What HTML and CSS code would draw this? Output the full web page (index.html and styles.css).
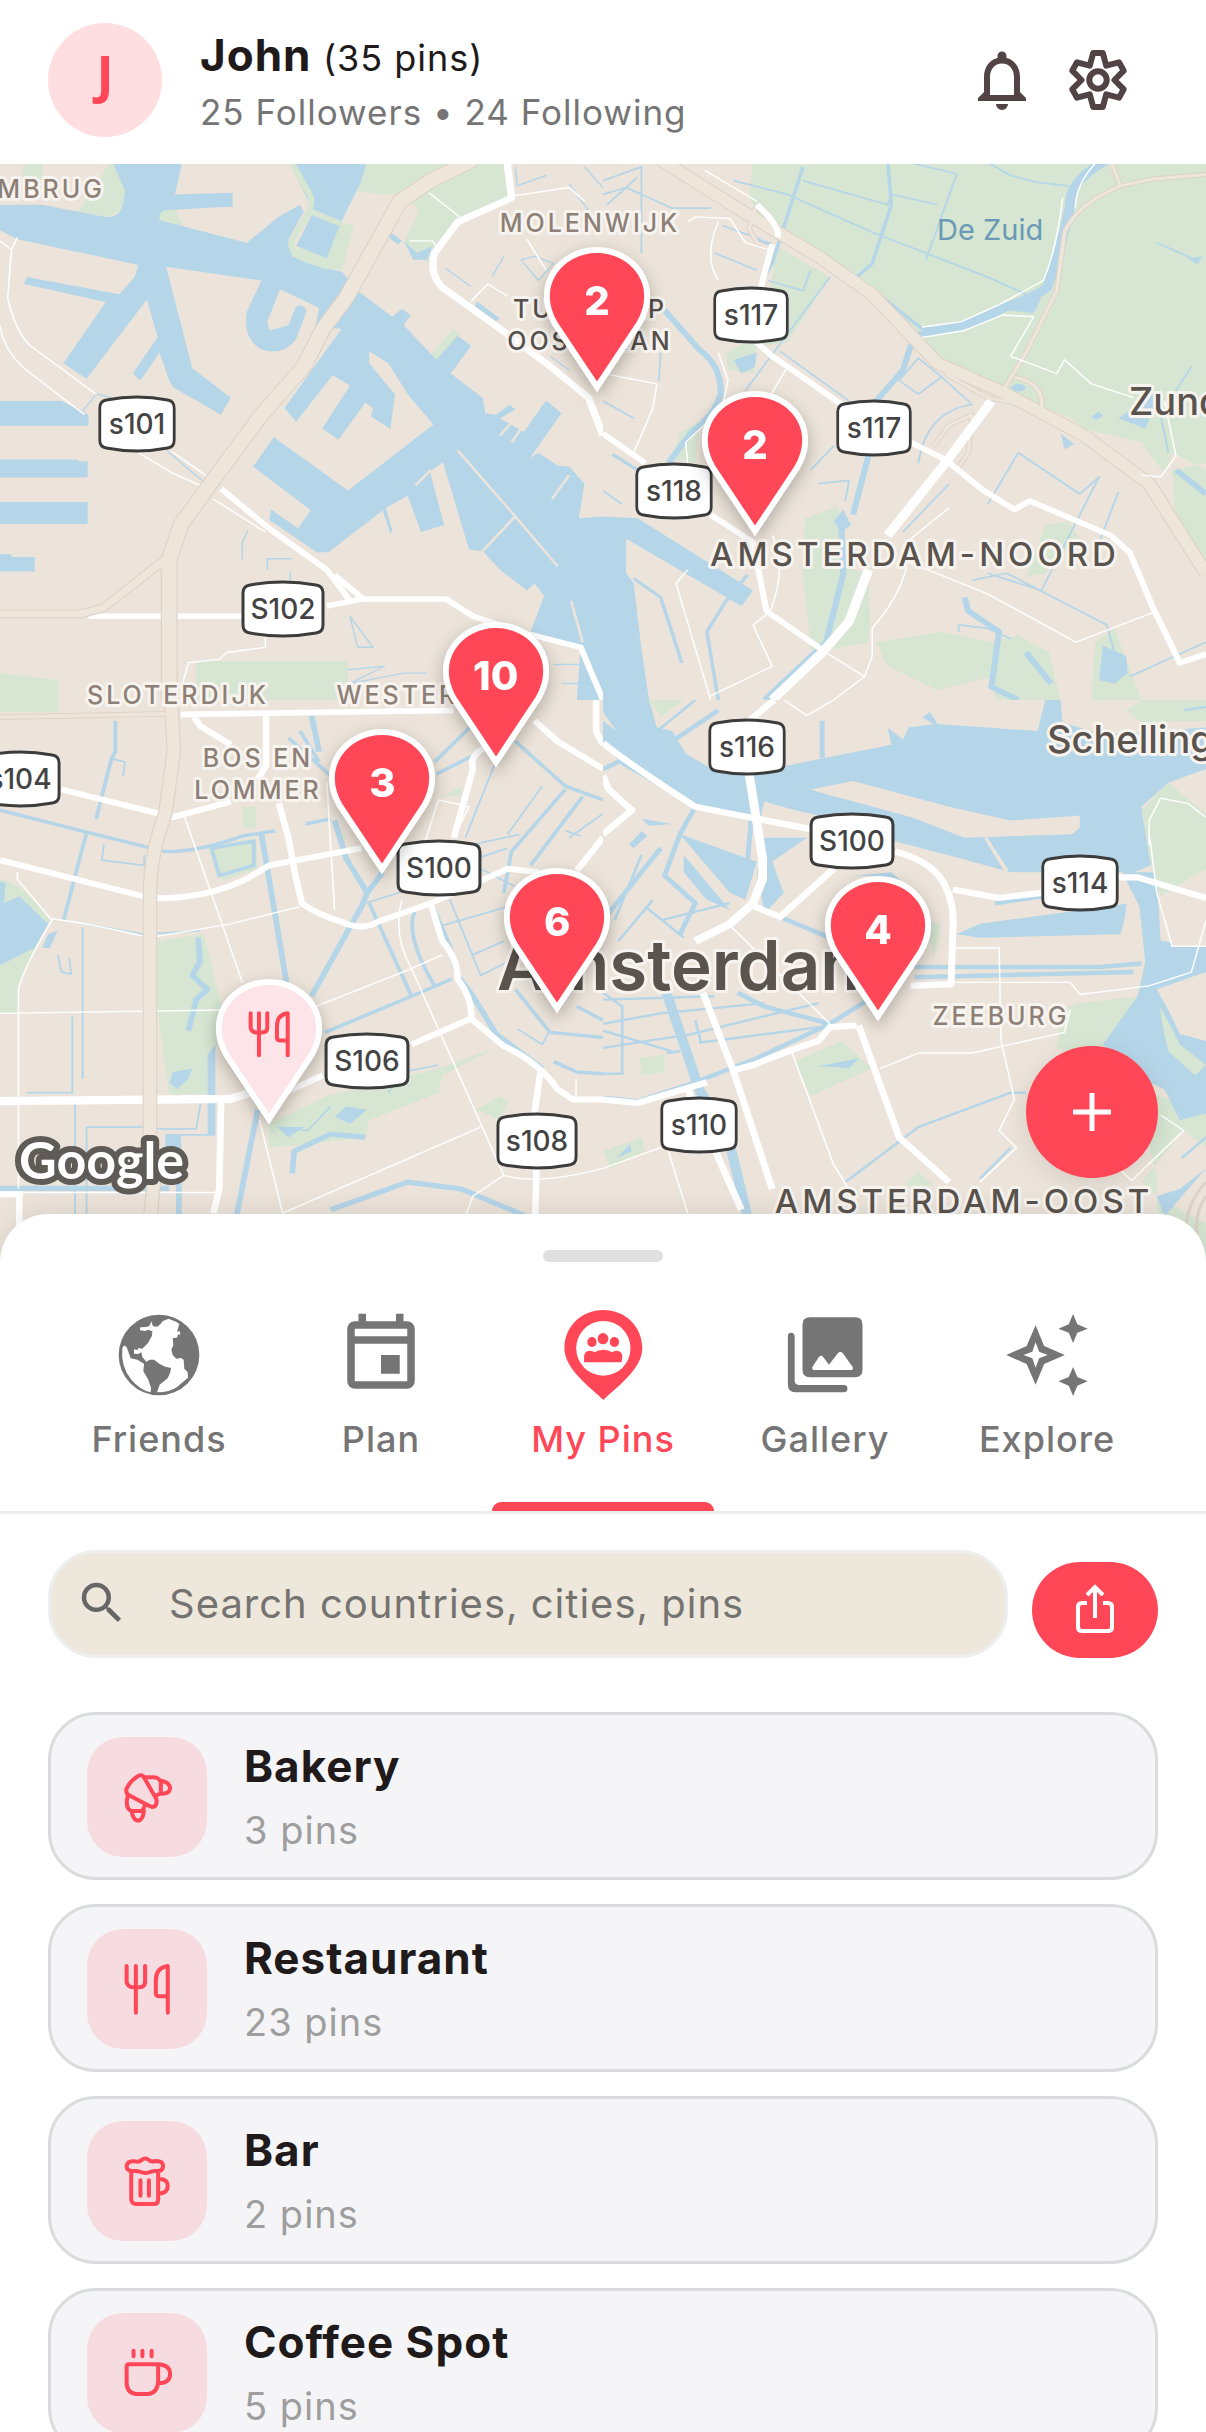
FILE: index.html
```
<!DOCTYPE html>
<html lang="en">

<head>
	<meta charset="utf-8">
	<meta name="viewport" content="width=device-width, initial-scale=1">
	<title>My Pins</title>
	<link rel="stylesheet" href="styles.css">
</head>

<body>
	<!-- shared shapes -->
	<svg class="defs" aria-hidden="true">
		<symbol id="shield" viewBox="0 0 86 58" preserveAspectRatio="none">
			<path d="M10 5 Q43 -1 76 5 Q83 6 83 13 V45 Q83 52 76 53 Q43 59 10 53 Q3 52 3 45 V13 Q3 6 10 5Z" fill="#fff" stroke="#3c3c3c" stroke-width="3" />
		</symbol>
		<symbol id="pin" viewBox="0 0 106 146">
			<path d="M53 140 L11 77 C-12 38 17 3 53 3 S118 38 95 77Z" fill="currentColor" stroke="#fff" stroke-width="6" />
		</symbol>
		<symbol id="cutlery" viewBox="304 776 156 180" preserveAspectRatio="none">
			<path d="M329 797V845Q332 860 345 861H362Q377 860 377 845V797M353 797V937M436 937V797Q405 802 405 840V880Q406 888 415 888H436" />
		</symbol>
	</svg>

	<header class="header">
		<div class="avatar">J</div>
		<div class="profile">
			<h1 class="profile-name">John <span>(35 pins)</span></h1>
			<p class="profile-stats">25 Followers • 24 Following</p>
		</div>
		<button class="icon-button" aria-label="Notifications">
			<svg viewBox="0 0 24 24"><path d="M10 20h4a2 2 0 0 1-4 0zM18 16v-5c0-3.07-1.63-5.64-4.5-6.32V4a1.5 1.5 0 0 0-3 0v.68C7.64 5.36 6 7.92 6 11v5l-2 2v1h16v-1l-2-2zm-2 1H8v-6c0-2.48 1.51-4.5 4-4.5s4 2.02 4 4.5v6z" fill="currentColor" /></svg>
		</button>
		<button class="icon-button" aria-label="Settings">
			<svg viewBox="-12 -12 24 24" fill="none" stroke="currentColor" stroke-width="2" stroke-linejoin="round">
				<path d="M-1.6-9H1.6L2.75-4.76 6.99-5.89 8.59-3.11 5.5 0 8.59 3.11 6.99 5.89 2.75 4.76 1.6 9H-1.6L-2.75 4.76-6.99 5.89-8.59 3.11-5.5 0-8.59-3.11-6.99-5.89-2.75-4.76Z" />
				<circle r="2.9" />
			</svg>
		</button>
	</header>

	<section class="map" aria-label="Map">
		<svg class="map-canvas" viewBox="0 164 1206 1100">
			<rect class="land" y="160" width="1206" height="1110" />

			<!-- north west -->
			<svg x="0" y="160" width="603" height="540" viewBox="0 0 1568 1568" preserveAspectRatio="none">
				<path class="green" d="M60 0H110V60L60 50ZM290 0L330 100 325 140 270 170 200 155ZM950 0H1320V110L1200 170 1115 300 1050 240 1090 150Q1060 90 1000 100L930 90ZM820 160L920 190 890 320 760 290ZM510 1455H905V1568H510ZM0 1490L150 1510V1568H0ZM350 0H440V34L360 20ZM1178 490L1196 505 1135 585 1122 565ZM405 150L450 130 480 200 415 190Z" />
				<path class="water" d="M290 0L325 90 320 130Q310 170 270 165L110 130H0V205L45 230 110 245 360 305 350 340 310 390 70 340 62 360 275 412 165 590 225 635 382 405 410 515 345 620 365 640 415 560 440 640 450 660 575 740 600 690 500 605 432 310 680 350 642 440Q630 520 680 550 740 570 770 520L797 440Q790 415 770 425L750 480 700 495 695 470 728 375 830 430 820 485 888 490 740 720 770 760 865 625 910 655 838 780 880 812 950 705 970 720 965 745 1015 782 1027 680 960 590V555L1010 590 1060 680 1127 768 905 960 712 805 658 890 808 1017 775 1070 705 1015 700 1045 825 1140 855 1138 995 1018 1015 1085 1020 1075 1003 1010 1060 975 1095 1080 1155 1060 1118 905 1152 878 1220 1132 1255 1135 1300 1190 1370 1250 1390 1230 1415 1265 1380 1370 1510 1410 1500 1568H1568V1035L1505 1040 1520 940 1480 890 1450 887 1400 850 1378 865 1460 735 1420 698 1362 790 1300 750 1340 725 1325 710 1290 740 1262 735 1255 690 1172 620 1225 540 1190 510 1135 580 1050 480 1068 450 1045 432 1020 455 930 380 890 325 800 300 760 280 750 230 790 150 780 130 725 165 642 240 415 175Q410 145 440 145L605 135V95L455 100 475 0ZM750 0H955L940 60 885 185 850 285 770 250 815 150ZM0 700H160L230 740V772H0ZM0 870H200L205 875H228V922H0ZM0 993H228V1057H0ZM0 1145H30V1153H90V1195H0ZM1050 235L1085 270 1125 250 1110 290 1075 290ZM1010 205L1045 235 1035 245 1010 225ZM1240 410L1300 460 1290 468 1235 425Z" />
				<path class="line-green" stroke-width="16" d="M755 0L810 110 805 150 760 230Q750 260 780 280L850 310 890 300M810 150L885 185" />
				<path class="canal" stroke-width="4" d="M630 1160V1110L645 1075M695 1190V1158H760M755 1195V1220M910 1325L930 1415H970L910 1325M905 1480L1000 1470 910 1520 1050 1490 1110 1490M1340 20L1345 75 1420 45M1160 315L1225 368M1355 290L1400 350 1440 300 1390 280 1355 290M1430 570L1480 610M435 845L530 935M215 730L250 680 290 690M1280 338L1310 280M1440 1465H1568M1460 1520H1568M1520 20L1568 80M1480 70L1540 160" />
				<path class="line-land" stroke-width="7" d="M1190 843L1340 1035 1450 1180M1340 1035L1255 1135M1480 915L1435 985M1485 1280L1515 1400M1340 750L1300 800M1362 770L1330 820M1120 900L1080 945" />
				<path class="road" stroke-width="4" d="M0 480Q10 560 80 620L220 740M30 260L20 400Q40 500 80 540L250 680M0 235L30 260 45 225M360 850L450 910 520 945M445 845L540 920M690 1380V1415L590 1430 570 1450 490 1460 475 1520M1115 95L1195 165M1330 105L1480 80 1520 120M555 985L690 1080M1065 235H1125L1135 250M1225 410L1268 360 1320 395M1370 230L1420 320" />
				<path class="road" stroke-width="16" d="M575 955L700 1070 850 1190 910 1280M870 1205L950 1280M230 1325H630M850 1295L940 1275H1160L1230 1325 1370 1375 1510 1415 1568 1568" />
				<path class="road" stroke-width="19" d="M1318 0L1330 110 1190 180 1130 270Q1115 330 1150 370L1300 490 1420 590 1530 690 1568 800" />
				<path class="casing" stroke-width="44" d="M1230 0L1120 60 1040 120 900 400 840 490 790 600 680 740 560 920 470 1060 440 1160V1568" />
				<path class="casing" stroke-width="26" d="M440 1150L270 1300 210 1318H0" />
				<path class="highway" stroke-width="38" d="M1230 0L1120 60 1040 120 900 400 840 490 790 600 680 740 560 920 470 1060 440 1160V1568" />
				<path class="highway" stroke-width="20" d="M440 1150L270 1300 210 1318H0" />
			</svg>

			<!-- north east -->
			<svg x="603" y="160" width="603" height="540" viewBox="0 0 1568 1568" preserveAspectRatio="none">
				<path class="green" d="M390 0H1568V900L1480 850 1460 910 1400 820 1250 780 1220 750 1100 700 1040 660 800 530 600 310 440 220 380 110ZM450 250L590 340 480 530 400 540 390 620 325 610 320 560 420 500ZM525 1040L610 1005 650 1190 690 1200 695 1330 690 1400 600 1420 540 1420 520 1200ZM710 1400L880 1370 1010 1400 1080 1380 1160 1430 1190 1568H1020L1010 1500 870 1540 740 1470ZM1568 880L1480 900 1490 1050 1568 1200ZM1280 1400L1330 1360 1400 1568H1270ZM1150 1060L1210 1050 1240 1100 1150 1200 1100 1210ZM200 790L250 760 240 880 180 870Z" />
				<path class="water" d="M0 1035L90 1040 390 1250 360 1295 60 1100V1200L80 1230 100 1420 120 1568H0ZM340 580L400 560 395 600 360 620ZM1300 1410L1360 1440 1365 1490 1330 1520 1290 1510ZM1060 660Q1080 640 1102 660 1080 685 1060 660ZM1270 745L1290 730 1300 745 1280 755ZM1340 750L1410 780 1440 700 1430 680ZM1190 795L1225 825 1200 840ZM1520 285L1560 280 1545 302ZM625 1015L600 1050 620 1080 645 1060ZM390 225L440 240 420 255ZM1140 400L1120 445 1040 435 1100 400Z" />
				<path class="canal" stroke-width="26" d="M1310 0Q1212 60 1215 130 1190 260 1155 370 1120 400 1040 430 950 490 830 500" />
				<path class="canal" stroke-width="16" d="M830 500L800 540 780 610 710 700 690 860 650 1030M620 1070L625 1200 580 1400 420 1568M155 430L250 550Q310 600 306 680 290 740 230 790L170 880M940 1270L950 1310 1030 1370 1010 1530 1080 1568M1100 1430L1165 1520M1490 900L1568 970" />
				<path class="canal" stroke-width="9" d="M80 1215L150 1270 205 1460M375 1205L320 1280 270 1370 300 1568M520 20L440 300 410 360M740 0L750 130 700 300 660 340M25 855L90 900M460 210L670 350 830 490" />
				<path class="canal" stroke-width="5" d="M340 60L480 100 700 210 1000 340 1100 390M520 60L740 130 750 100 870 130M920 40L840 290M770 0L920 40M990 0L1060 45 1130 65 1210 75M590 340L370 670M460 555L640 700M1080 850L1000 1000M1080 850L1240 970 1290 920 1140 1250 1000 1200M960 1220L1050 1200 1310 1350 1330 1430M925 1370V1350L1000 1360 1060 1390M1370 1500L1568 1400M1340 965L1290 1110M780 1080L900 940M1530 600L1490 670M0 60L100 20V270M0 100L60 80 180 140 280 140M10 130L90 50M310 190L410 230M290 270L400 320M770 640L820 575 880 630 820 680 770 640M880 630L960 710Q840 730 820 880M540 900L600 830M560 940L640 930 630 990M150 560L145 640M0 700L80 750M1440 240L1530 285M1450 740L1470 850M1480 1050L1540 1160M540 320L520 380 430 350M0 960L50 1000" />
				<path class="casing" stroke-width="38" d="M150 0L350 140 560 280 700 390 870 590 1050 680 1250 800 1420 940 1568 1200" />
				<path class="casing" stroke-width="14" d="M1568 42L1430 55 1345 75Q1230 130 1200 210L1180 380 1100 560 1040 670M1320 0L1345 75M1070 630Q1150 650 1140 720L1000 690 890 620M400 130L380 200 400 240 440 260M860 830L900 770 960 740 950 850 920 900" />
				<path class="highway" stroke-width="32" d="M150 0L350 140 560 280 700 390 870 590 1050 680 1250 800 1420 940 1568 1200" />
				<path class="highway" stroke-width="9" d="M1568 42L1430 55 1345 75Q1230 130 1200 210L1180 380 1100 560 1040 670M1320 0L1345 75M1070 630Q1150 650 1140 720L1000 690 890 620M400 130L380 200 400 240 440 260M860 830L900 770 960 740 950 850 920 900" />
				<path class="road" stroke-width="4" d="M480 600L400 750M1120 455L1060 570 1180 620 1200 580 1270 650 1380 690M1460 700L1490 860 1450 920 1400 915M1280 10Q1230 70 1228 140M1195 110Q1180 260 1145 350L1030 420 930 470 830 485M830 515L940 495 1040 450 1120 455M800 1170L1000 1260 1230 1400 1440 1310M790 1180Q770 1270 700 1360V1440L680 1500 600 1568M580 1430L680 1500M220 1190L190 1230 280 1568M220 180L240 165 330 170 370 240 430 260M265 30L340 80 400 120M0 620L140 650 130 720 80 850M440 1090Q480 1180 435 1310M300 180Q260 280 300 350M300 560L325 640 310 720 215 820 220 880M425 1320L390 1350 440 1470 280 1556M900 1010L800 1100" />
				<path class="road" stroke-width="16" d="M400 130Q460 190 455 225M440 245L410 370M400 530L440 570 480 600 620 710M800 820L890 870 990 960 1070 1015 1110 990 1320 1090 1370 1140 1430 1300 1500 1460 1568 1435M0 795L110 880M280 1030L390 1110 425 1310 580 1430" />
				<path class="road" stroke-width="25" d="M1010 700L890 880 740 1090M690 1190L640 1340 570 1430 440 1568" />
			</svg>

			<!-- south west -->
			<svg x="0" y="700" width="603" height="570" viewBox="0 0 1568 1655" preserveAspectRatio="none">
				<path class="green" d="M0 0H150V35H0ZM0 520Q60 530 130 640L50 820V910H0ZM410 700L530 680 580 900 540 1145H440L410 900ZM540 430L665 400 670 490 580 525ZM860 350L900 400 890 430ZM700 1230L850 1150 1140 1070 1290 1010 1150 1090 1140 1140 960 1220 950 1270 700 1300ZM1240 1190L1300 1150 1320 1170 1300 1220ZM630 310H665V370H630ZM1150 280L1200 250V280Z" />
				<path class="water" d="M0 530H15L10 590 50 570 125 650 90 720 0 770ZM430 1260H540V1030L560 1000V1265H470L475 1360 430 1320ZM125 680L185 655 150 670 130 720 110 720ZM720 1240L790 1240 750 1270ZM900 1180L955 1190 910 1230 870 1210ZM440 1110L450 1080 500 1070 490 1100 460 1130Z" />
				<path class="canal" stroke-width="15" d="M680 390L745 820M870 350L900 460 955 560M995 500L955 560 940 600 810 860M515 690L520 760 500 800 540 840 510 870 490 960M760 1375L765 1310 860 1260 950 1270M1120 590L1170 720 1190 800 1230 860 1290 970 1410 1070M670 1190L615 1500M465 1400V1568M860 1480L1060 1400 1200 1420 1370 1500M0 1418H440M810 45L830 150" />
				<path class="canal" stroke-width="10" d="M0 320L230 385 430 440Q520 440 630 395L715 380M300 60V150L290 170 250 345M225 385L165 640M960 590L1070 860M845 965L1070 860 1175 810M1080 610Q1050 680 1130 830M1135 215L1250 150M1130 180L1230 70M1340 120L1470 250 1568 290M1470 260L1330 440 1310 560M1515 280L1380 480M1340 840L1430 965 1568 980M1500 890L1568 930M1440 1050L1500 1080 1568 1085M750 110L860 220M795 360L860 345M550 430L660 410V480L570 510ZM780 90L830 180" />
				<path class="canal" stroke-width="5" d="M950 590L1050 555M1150 655L1320 600M1170 580L1250 800 1320 760M1568 330L1480 400M1230 420L1350 390M1240 460L1320 430M1285 190L1210 400M1345 955L1410 1000 1430 960M188 920V1140H70M215 660V1100M195 1170V1568M225 1240H380L420 1245H510L525 1150M225 1240V1568M730 1240L800 1250 860 1180M1010 1140L1050 1080 1140 1060M220 650L370 680 520 670M270 420L265 465 375 480V450M290 170L325 180 320 220M150 740L160 790 185 795 180 750M1230 740L1310 700M1250 490L1370 560M1410 250L1320 390M1470 380L1510 395" />
				<path class="road" stroke-width="4" d="M480 340L590 690 630 820M390 690L600 650 780 600M0 910L580 900M45 500V520L135 640Q60 780 48 840V1420M135 635Q240 650 390 690M820 890L1070 780 1150 740M1045 580Q1020 680 1070 780L1310 1380Q1400 1410 1568 1360M675 1220L735 1490 1250 1240M0 1430H560M1100 430L1140 290 1220 310 1180 400M850 240L870 610M1310 1380L1230 1440 1210 1500M1498 1100V1160" />
				<path class="road" stroke-width="17" d="M470 42L1180 30M505 50L520 75 600 130M692 40V190L670 230M160 260L450 340 600 295M725 300L750 400 770 520 785 590Q820 620 890 645 940 670 980 645L1120 590 1320 490 1400 500M0 465L390 575Q530 580 640 520L700 480 940 430M1120 590L1150 700Q1190 750 1190 810 1230 870 1225 925L1310 1005Q1400 1050 1450 1130L1490 1160H1568M1225 925L1070 1000M840 1090L740 1140M575 1170L570 1420 555 1490M50 1430V1568M0 1435H60M1405 1080L1390 1200M1395 1360L1390 1568M1180 400L1230 200Q1220 160 1260 140M1390 60L1450 120 1568 200M1500 495L1568 400M1550 0V90L1568 130" />
				<path class="road" stroke-width="24" d="M0 1165L600 1158 650 1140" />
				<path class="casing" stroke-width="38" d="M445 0L452 150 430 330Q390 450 390 560V1260L400 1400 385 1568" />
				<path class="casing" stroke-width="16" d="M0 50L430 40" />
				<path class="highway" stroke-width="32" d="M445 0L452 150 430 330Q390 450 390 560V1260L400 1400 385 1568" />
				<path class="highway" stroke-width="11" d="M0 50L430 40" />
			</svg>

			<!-- south east -->
			<svg x="603" y="700" width="603" height="570" viewBox="0 0 1568 1655" preserveAspectRatio="none">
				<path class="green" d="M1240 880L1400 860 1340 960 1300 1040 1180 1010 1190 900ZM1380 1130L1568 1190V1300L1510 1250 1400 1400 1440 1440 1568 1520V1655H1440V1380ZM500 1050L620 990 700 1070 540 1150ZM95 1040L160 1030V1080L100 1090ZM0 1310L100 1270 110 1310 20 1360ZM780 1410L820 1370 860 1410ZM120 0H210L150 50ZM1360 30L1400 0H1568V60L1400 65ZM840 640L880 650 860 750Z" />
				<path class="water" d="M0 0H120L140 80 180 90 215 155 290 205 480 190 750 130 740 80 780 115 795 80 860 70 830 50 850 35 870 70 1130 90 1150 0H1190L1195 65 1300 100 1568 80V200L1470 240 1400 310 1425 480 1380 500 1060 500 930 460 760 410 530 330 420 295 410 340 240 310 50 190 0 120Z" />
				<path class="water" d="M1350 500H1440L1450 700 1568 715V790L1440 840 1470 900 1500 970 1568 990V1200L1500 1220 1460 1130 1400 1100 1300 1000 1390 860 1410 760 1395 600ZM920 680L980 650 1370 590 1345 680 980 690ZM420 400L530 400 440 470 470 560 420 620 400 500ZM200 390L300 430 400 470 370 580 330 560ZM210 450L330 610 270 580 210 500ZM1568 1360L1460 1500 1440 1440 1500 1420ZM555 1065L665 1040 640 1070 600 1065ZM35 1330L70 1290 75 1310ZM100 345L180 360 120 365ZM100 380L115 395 80 430 68 420ZM650 510L750 500 780 530 700 510Z" />
				<path class="land" d="M540 260L650 235 900 310 1060 350 1240 335V370L1220 390 940 400 800 340 570 270ZM0 35L35 90 0 60ZM1365 570L1380 560 1400 740 1340 750 1300 720 1350 680ZM420 300L540 330 760 390 700 410 560 370 420 330ZM990 400L1000 400 1055 495 1045 500Z" />
				<path class="green" d="M1400 320L1470 240 1568 330V490L1450 570 1425 480ZM1440 870L1500 1000 1568 1060 1540 1090 1470 1020Z" />
				<path class="land" d="M1450 575L1568 500V715H1480Z" />
				<path class="canal" stroke-width="26" d="M165 850L250 1130 330 1290 390 1568" />
				<path class="canal" stroke-width="13" d="M200 390L160 510 240 590 200 680M150 430L0 640M460 630L590 690M570 60V170M810 775H1290L1400 765M810 805L1380 790M240 310L200 390M0 200L60 170M385 350L375 480M0 1155L90 1165 240 1110 400 1040 590 940 690 870M350 850L420 890 590 940M1020 590L1140 570M180 120L300 30" />
				<path class="canal" stroke-width="7" d="M130 580L40 700M150 640L330 590M110 600L210 690M0 870L290 860M0 940L150 910 420 880M0 1010L230 970 560 880M0 1085H50V890L0 850M250 995L560 950M240 930L255 995M630 1400L820 1240 1060 1140H1100M1445 870Q1450 1100 1568 1200M0 960L180 1020M1568 20L1510 30M165 1025L200 1020M240 0L130 100M1060 1300L980 1390M1505 1330L1568 1270M100 450L30 640" />
				<path class="road" stroke-width="4" d="M1420 420V350L1450 285 1520 300 1568 340M1422 400L1440 560 1480 715H1568M910 820H1215L1240 855 1420 830 1530 790 1568 640M915 720H1030L1035 990 1070 1160 1030 1250 1075 1300 980 1400M720 1070L820 1025H960L1200 965 1215 900M490 1020L600 1350 640 1420M470 0L530 45 600 0M335 660L590 940M1450 1205L1510 1250 1375 1395 1340 1360M0 1360L150 1300M170 1310L220 1490" />
				<path class="road" stroke-width="18" d="M0 125Q60 180 240 310L540 375M760 440Q860 470 890 540 915 600 910 660L905 825 800 830M445 0L380 60M395 600L460 630 600 490M260 850L340 1080 440 1420M0 1160L90 1170 270 1110M340 1075L390 1060Q500 1010 560 990L590 950 660 945M665 945L770 1270 900 1400M910 550L1030 575 1140 560M1340 515H1390L1568 575M0 220L15 260 75 320 0 390M220 1130L360 1480" />
				<path class="road" stroke-width="23" d="M380 215L415 460V520L390 590 330 650 240 700" />
				<path class="casing" stroke-width="8" d="M1568 1400Q1500 1480 1520 1600M1568 1440Q1530 1500 1550 1600" />
			</svg>

			<g class="place">
				<text x="105" y="198" text-anchor="end">MBRUG</text>
				<text x="590" y="232">MOLENWIJK</text>
				<text x="178" y="704">SLOTERDIJK</text>
				<text x="436" y="704">WESTERPARK</text>
				<text x="258" y="767">BOS EN</text>
				<text x="258" y="799">LOMMER</text>
				<text x="1001" y="1025">ZEEBURG</text>
				<g class="place-dark">
					<text x="590" y="318">TUINDORP</text>
					<text x="590" y="350">OOSTZAAN</text>
				</g>
			</g>
			<g class="district">
				<text x="915" y="566">AMSTERDAM-NOORD</text>
				<text x="964" y="1213">AMSTERDAM-OOST</text>
			</g>
			<g class="town">
				<text x="1129" y="415">Zunderdorp</text>
				<text x="1047" y="753">Schellingwoude</text>
			</g>
			<text class="river" x="937" y="240">De Zuid</text>
			<text class="city" x="497" y="990">Amsterdam</text>

			<g class="route">
				<use href="#shield" x="97" y="395" width="80" height="58" /><text x="137" y="434">s101</text>
				<use href="#shield" x="240" y="580" width="86" height="58" /><text x="283" y="619">S102</text>
				<use href="#shield" x="712" y="286" width="78" height="58" /><text x="751" y="325">s117</text>
				<use href="#shield" x="835" y="399" width="78" height="58" /><text x="874" y="438">s117</text>
				<use href="#shield" x="634" y="462" width="80" height="58" /><text x="674" y="501">s118</text>
				<use href="#shield" x="-22" y="750" width="84" height="58" /><text x="20" y="789">s104</text>
				<use href="#shield" x="395" y="839" width="88" height="58" /><text x="439" y="878">S100</text>
				<use href="#shield" x="323" y="1032" width="88" height="58" /><text x="367" y="1071">S106</text>
				<use href="#shield" x="495" y="1112" width="84" height="58" /><text x="537" y="1151">s108</text>
				<use href="#shield" x="707" y="718" width="80" height="58" /><text x="747" y="757">s116</text>
				<use href="#shield" x="808" y="812" width="88" height="58" /><text x="852" y="851">S100</text>
				<use href="#shield" x="1040" y="854" width="80" height="58" /><text x="1080" y="893">s114</text>
				<use href="#shield" x="659" y="1096" width="80" height="58" /><text x="699" y="1135">s110</text>
			</g>
			<text class="attribution" x="19" y="1179">Google</text>
		</svg>

		<button class="pin pin-oostzaan"><svg><use href="#pin" /></svg><span>2</span></button>
		<button class="pin pin-noord"><svg><use href="#pin" /></svg><span>2</span></button>
		<button class="pin pin-westerpark"><svg><use href="#pin" /></svg><span>10</span></button>
		<button class="pin pin-west"><svg><use href="#pin" /></svg><span>3</span></button>
		<button class="pin pin-centre"><svg><use href="#pin" /></svg><span>6</span></button>
		<button class="pin pin-oost"><svg><use href="#pin" /></svg><span>4</span></button>
		<button class="pin pin-light pin-zuid" aria-label="Restaurant">
			<svg><use href="#pin" /></svg>
			<svg class="pin-icon line-icon"><use href="#cutlery" /></svg>
		</button>
		<button class="add-button" aria-label="Add pin">
			<svg viewBox="0 0 40 40" stroke="currentColor" stroke-width="5"><path d="M20 1V39M1 20H39" /></svg>
		</button>
	</section>

	<main class="sheet">
		<div class="handle"></div>
		<nav class="tabs">
			<button class="tab">
				<svg viewBox="43 31 270 270">
					<circle cx="178" cy="166" r="121" fill="currentColor" />
					<path fill="#fff" d="M122 83L121 92 136 94 146 90 158 95 157 108 145 130 128 147 116 145 114 151 103 149V162L116 163 125 158 128 172 140 186 150 180H163L180 193 197 201 214 205 212 218 204 236 180 255 172 278Q210 278 232 262L265 234 264 218 254 207 252 180 244 175 230 177 219 166 215 150 221 136 219 115 232 114 234 106 242 104 240 94 232 96 239 73 232 68 207 57 190 64 182 74 173 81 160 80 155 65 150 78 140 82ZM68 145Q74 132 82 145L93 176 113 180 133 192 131 215 146 240 154 264 153 278Q120 270 95 240 62 200 68 145Z" />
				</svg>
				<span>Friends</span>
			</button>
			<button class="tab">
				<svg viewBox="0 0 24 24"><path fill="currentColor" fill-rule="evenodd" d="M6 1V3H5A2 2 0 0 0 3 5V19A2 2 0 0 0 5 21H19A2 2 0 0 0 21 19V5A2 2 0 0 0 19 3H18V1H16V3H8V1ZM5 5H19V7H5ZM5 9H19V19H5ZM12 12H17V17H12Z" /></svg>
				<span>Plan</span>
			</button>
			<button class="tab tab-active" aria-current="page">
				<svg viewBox="50 30 252 270" preserveAspectRatio="none">
					<path fill="currentColor" d="M177 300C145 265 68 210 68 145 68 80 115 30 177 30S286 80 286 145C286 210 209 265 177 300Z" />
					<ellipse cx="177" cy="145" rx="76" ry="82" fill="#fff" />
					<g fill="currentColor">
						<ellipse cx="176" cy="116" rx="15" ry="17" />
						<ellipse cx="145" cy="126" rx="13" ry="15" />
						<ellipse cx="208" cy="126" rx="13" ry="15" />
						<path d="M123 187V170Q123 153 138 152 148 152 153 157 162 149 177 149T201 157Q206 152 215 152 230 153 230 170L228 187Z" />
					</g>
				</svg>
				<span>My Pins</span>
			</button>
			<button class="tab">
				<svg viewBox="672 30 252 270" preserveAspectRatio="none" fill="currentColor">
					<path fill-rule="evenodd" d="M756 52H882Q903 52 903 74V210Q903 232 882 232H756Q735 232 735 210V74Q735 52 756 52ZM768 210H870Q880 208 875 200L848 160Q841 150 834 160L809 194 793 171Q787 164 781 171L763 200Q760 208 768 210Z" />
					<path d="M694 108Q694 98 703 98T713 108V244Q714 254 724 255H851Q861 256 861 266T851 277H715Q694 276 694 254Z" />
				</svg>
				<span>Gallery</span>
			</button>
			<button class="tab">
				<svg viewBox="1294 30 252 270" preserveAspectRatio="none" fill="currentColor">
					<path fill-rule="evenodd" d="M1388 76L1412 138 1470 165 1412 192 1388 254 1363 192 1306 165 1363 138ZM1388 127L1379 155 1354 165 1379 175 1388 203 1398 175 1422 165 1398 155ZM1493 42L1505 73 1534 86 1505 98 1493 129 1481 98 1452 86 1481 73ZM1493 201L1505 231 1534 244 1505 257 1493 288 1481 257 1452 244 1481 231Z" />
				</svg>
				<span>Explore</span>
			</button>
		</nav>

		<div class="content">
			<div class="search-row">
				<label class="search">
					<svg viewBox="0 0 24 24" aria-hidden="true"><path fill="currentColor" d="M15.5 14h-.79l-.28-.27A6.47 6.47 0 0 0 16 9.5 6.5 6.5 0 1 0 9.5 16c1.61 0 3.09-.59 4.23-1.57l.27.28v.79l5 4.99L20.49 19l-4.99-5zm-6 0C7.01 14 5 11.99 5 9.5S7.01 5 9.5 5 14 7.01 14 9.5 11.99 14 9.5 14z" /></svg>
					<input type="search" placeholder="Search countries, cities, pins" aria-label="Search countries, cities, pins">
				</label>
				<button class="share-button" aria-label="Share">
					<svg viewBox="0 0 54 54" fill="none" stroke="currentColor" stroke-width="4"><path d="M19 20H14Q10 20 10 24V44Q10 48 14 48H40Q44 48 44 44V24Q44 20 40 20H35M27 35V5M19 12L27 4L35 12" /></svg>
				</button>
			</div>

			<ul class="categories">
				<li class="category">
					<div class="category-icon">
						<svg class="line-icon" viewBox="304 199 156 180" preserveAspectRatio="none"><path d="M331 281Q324 268 333 255 345 234 361 225 370 221 374 230L406 294Q410 318 395 319 390 318 331 281ZM378 230H398Q413 230 418 244V278L403 286M418 240Q442 245 442 263 441 280 418 279M332 285Q326 312 334 325L341 331H370L377 313M342 332Q346 359 359 360 372 358 374 330" /></svg>
					</div>
					<div><h2>Bakery</h2><p>3 pins</p></div>
				</li>
				<li class="category">
					<div class="category-icon">
						<svg class="line-icon"><use href="#cutlery" /></svg>
					</div>
					<div><h2>Restaurant</h2><p>23 pins</p></div>
				</li>
				<li class="category">
					<div class="category-icon">
						<svg class="line-icon" viewBox="304 212 156 180" preserveAspectRatio="none"><path d="M345 272Q328 272 329 257 332 240 350 243 362 246 368 239 377 230 387 239 392 246 405 242 424 242 424 258 422 273 408 272 396 271 388 276 376 280 366 275 357 271 345 272ZM341 273V358Q342 371 354 371H400Q411 371 411 358V273M413 296Q436 296 436 317T413 340M365 300V346M387 300V346" /></svg>
					</div>
					<div><h2>Bar</h2><p>2 pins</p></div>
				</li>
				<li class="category">
					<div class="category-icon">
						<svg class="line-icon" viewBox="304 787 156 180" preserveAspectRatio="none"><path d="M335 851H411V905Q408 938 385 940H353Q329 937 329 905V858Q329 851 335 851ZM411 851Q442 853 442 880T413 908M347 810V827M370 810V827M394 810V827" /></svg>
					</div>
					<div><h2>Coffee Spot</h2><p>5 pins</p></div>
				</li>
			</ul>
		</div>
	</main>
</body>

</html>
```
FILE: styles.css
```
* {
	box-sizing: border-box;
}

body {
	display: flex;
	flex-direction: column;
	height: 100vh;
	margin: 0;
	overflow: hidden;
	background: #fff;
	color: #201a1b;
	font-family: Inter, Roboto, sans-serif;
}

h1,
h2,
p,
ul {
	margin: 0;
	padding: 0;
}

button {
	padding: 0;
	border: 0;
	background: none;
	color: inherit;
	font: inherit;
}

svg {
	display: block;
}

.defs {
	position: absolute;
	width: 0;
	height: 0;
}

/* header */
.header {
	display: flex;
	flex: none;
	align-items: center;
	height: 164px;
	padding: 0 60px 4px 48px;
}

.avatar {
	width: 114px;
	height: 114px;
	border-radius: 50%;
	background: #ffdee2;
	color: #ff4757;
	font-family: "Noto Sans", sans-serif;
	font-size: 52px;
	font-weight: 700;
	line-height: 100px;
	text-align: center;
}

.profile {
	flex: 1;
	padding: 4px 0 0 38px;
}

.profile-name {
	font-size: 44px;
	font-weight: 700;
	line-height: 56px;
	letter-spacing: 1px;
}

.profile-name span {
	font-size: 36px;
	font-weight: 400;
}

.profile-stats {
	color: #757575;
	font-size: 35px;
	line-height: 52px;
	letter-spacing: 1px;
}

.icon-button {
	display: flex;
	justify-content: center;
	width: 96px;
	color: #524345;
}

.icon-button svg {
	width: 72px;
	height: 72px;
}

/* map */
.map {
	position: relative;
	flex: none;
}

.map-canvas {
	width: 100%;
	height: auto;
}

.land {
	fill: #ece4da;
}

.water {
	fill: #b5d5e8;
}

.green {
	fill: #d6e6d2;
}

.canal,
.road,
.casing,
.highway,
.line-land,
.line-green {
	fill: none;
	stroke-linejoin: round;
}

.canal {
	stroke: #b5d5e8;
}

.road {
	stroke: #fff;
}

.casing {
	stroke: #ddd2c8;
}

.highway {
	stroke: #eee5db;
}

.line-land {
	stroke: #ece4da;
}

.line-green {
	stroke: #d6e6d2;
}

.map-canvas text {
	paint-order: stroke;
	stroke: #f7f3ee;
	stroke-width: 6px;
	stroke-linejoin: round;
}

.place {
	fill: #8d8077;
	font-size: 25px;
	font-weight: 500;
	letter-spacing: 3px;
	text-anchor: middle;
}

.place-dark {
	fill: #55504c;
}

.district {
	fill: #5a534e;
	font-size: 33px;
	font-weight: 500;
	letter-spacing: 4px;
	text-anchor: middle;
}

.town {
	fill: #5a534e;
	font-size: 38px;
	font-weight: 500;
}

.map-canvas .river {
	fill: #6a9ab5;
	font-size: 29px;
	stroke: none;
}

.city {
	fill: #5a534e;
	font-size: 69px;
	font-weight: 600;
}

.map-canvas .route text {
	fill: #444;
	font-size: 28px;
	font-weight: 500;
	stroke: none;
	text-anchor: middle;
}

.map-canvas .attribution {
	fill: #fff;
	font-family: Lato, sans-serif;
	font-size: 52px;
	font-weight: 700;
	stroke: #5f5b57;
	stroke-width: 12px;
}

.pin {
	position: absolute;
	width: 106px;
	height: 146px;
	transform: translate(-50%, -100%);
	color: #ff4757;
	filter: drop-shadow(0 6px 8px rgba(0, 0, 0, 0.25));
}

.pin svg {
	width: 106px;
	height: 146px;
}

.pin span {
	position: absolute;
	top: 29px;
	left: 0;
	width: 100%;
	color: #fff;
	font-size: 40px;
	font-weight: 800;
	line-height: 50px;
	text-align: center;
}

.pin-light {
	color: #fce4e8;
}

.pin .pin-icon {
	position: absolute;
	top: 28px;
	left: 26px;
	width: 54px;
	height: 54px;
}

.pin-oostzaan {
	left: 49.5%;
	top: 20.8%;
}

.pin-noord {
	left: 62.6%;
	top: 33.9%;
}

.pin-westerpark {
	left: 41.1%;
	top: 54.9%;
}

.pin-west {
	left: 31.7%;
	top: 64.6%;
}

.pin-centre {
	left: 46.2%;
	top: 77.3%;
}

.pin-oost {
	left: 72.8%;
	top: 78%;
}

.pin-zuid {
	left: 22.3%;
	top: 87.4%;
}

.add-button {
	position: absolute;
	right: 48px;
	bottom: 86px;
	display: flex;
	align-items: center;
	justify-content: center;
	width: 132px;
	height: 132px;
	border-radius: 50%;
	background: #ff4757;
	box-shadow: 0 6px 24px rgba(0, 0, 0, 0.1);
	color: #fff;
}

.add-button svg {
	width: 40px;
	height: 40px;
}

/* bottom sheet */
.sheet {
	position: relative;
	flex: 1;
	min-height: 0;
	margin-top: -50px;
	padding-top: 36px;
	border-radius: 48px 48px 0 0;
	background: #fff;
	box-shadow: 0 0 30px rgba(0, 0, 0, 0.1);
}

.handle {
	width: 120px;
	height: 12px;
	margin: 0 auto 48px;
	border-radius: 6px;
	background: #e0e0e0;
}

.tabs {
	display: flex;
	padding: 0 48px;
	border-bottom: 3px solid #eee;
}

.tab {
	position: relative;
	display: flex;
	flex: 1;
	flex-direction: column;
	align-items: center;
	gap: 16px;
	height: 201px;
	color: #757575;
	font-size: 36px;
	font-weight: 500;
	line-height: 46px;
	letter-spacing: 1px;
}

.tab svg {
	width: 90px;
	height: 90px;
}

.tab-active {
	color: #ff4757;
}

.tab-active::after {
	content: "";
	position: absolute;
	right: 0;
	bottom: 0;
	left: 0;
	height: 9px;
	border-radius: 9px 9px 0 0;
	background: #ff4757;
}

.content {
	padding: 36px 48px;
}

.search-row {
	display: flex;
	align-items: flex-end;
	gap: 24px;
	margin-bottom: 54px;
}

.search {
	display: flex;
	flex: 1;
	align-items: center;
	gap: 40px;
	height: 108px;
	padding: 0 24px 2px;
	border: 3px solid #eee;
	border-radius: 48px;
	background: #eee8dc;
	color: #666;
}

.search svg {
	flex: none;
	width: 54px;
	height: 54px;
}

.search input {
	flex: 1;
	min-width: 0;
	padding: 0;
	border: 0;
	outline: 0;
	background: none;
	color: #201a1b;
	font: inherit;
	font-size: 40px;
	letter-spacing: 1px;
}

.search input::placeholder {
	color: #757370;
	opacity: 1;
}

.share-button {
	display: flex;
	align-items: center;
	justify-content: center;
	width: 126px;
	height: 96px;
	border-radius: 48px;
	background: #ff4757;
	color: #fff;
}

.share-button svg {
	width: 54px;
	height: 54px;
}

.categories {
	display: flex;
	flex-direction: column;
	gap: 24px;
	list-style: none;
}

.category {
	display: flex;
	align-items: center;
	gap: 37px;
	height: 168px;
	padding: 2px 36px 0;
	border: 3px solid #dadbdd;
	border-radius: 48px;
	background: #f5f5f8;
}

.category-icon {
	display: flex;
	align-items: center;
	justify-content: center;
	width: 120px;
	height: 120px;
	border-radius: 36px;
	background: #f6dce1;
	color: #ff4757;
}

.category-icon svg {
	width: 60px;
	height: 60px;
}

.line-icon {
	fill: none;
	stroke: #ff4757;
	stroke-width: 4px;
	stroke-linecap: round;
	stroke-linejoin: round;
}

.line-icon path,
#cutlery path {
	vector-effect: non-scaling-stroke;
}

.category h2 {
	font-size: 44px;
	font-weight: 700;
	line-height: 66px;
	letter-spacing: 1px;
}

.category p {
	color: #9e9e9e;
	font-size: 38px;
	line-height: 62px;
	letter-spacing: 1px;
}
```
